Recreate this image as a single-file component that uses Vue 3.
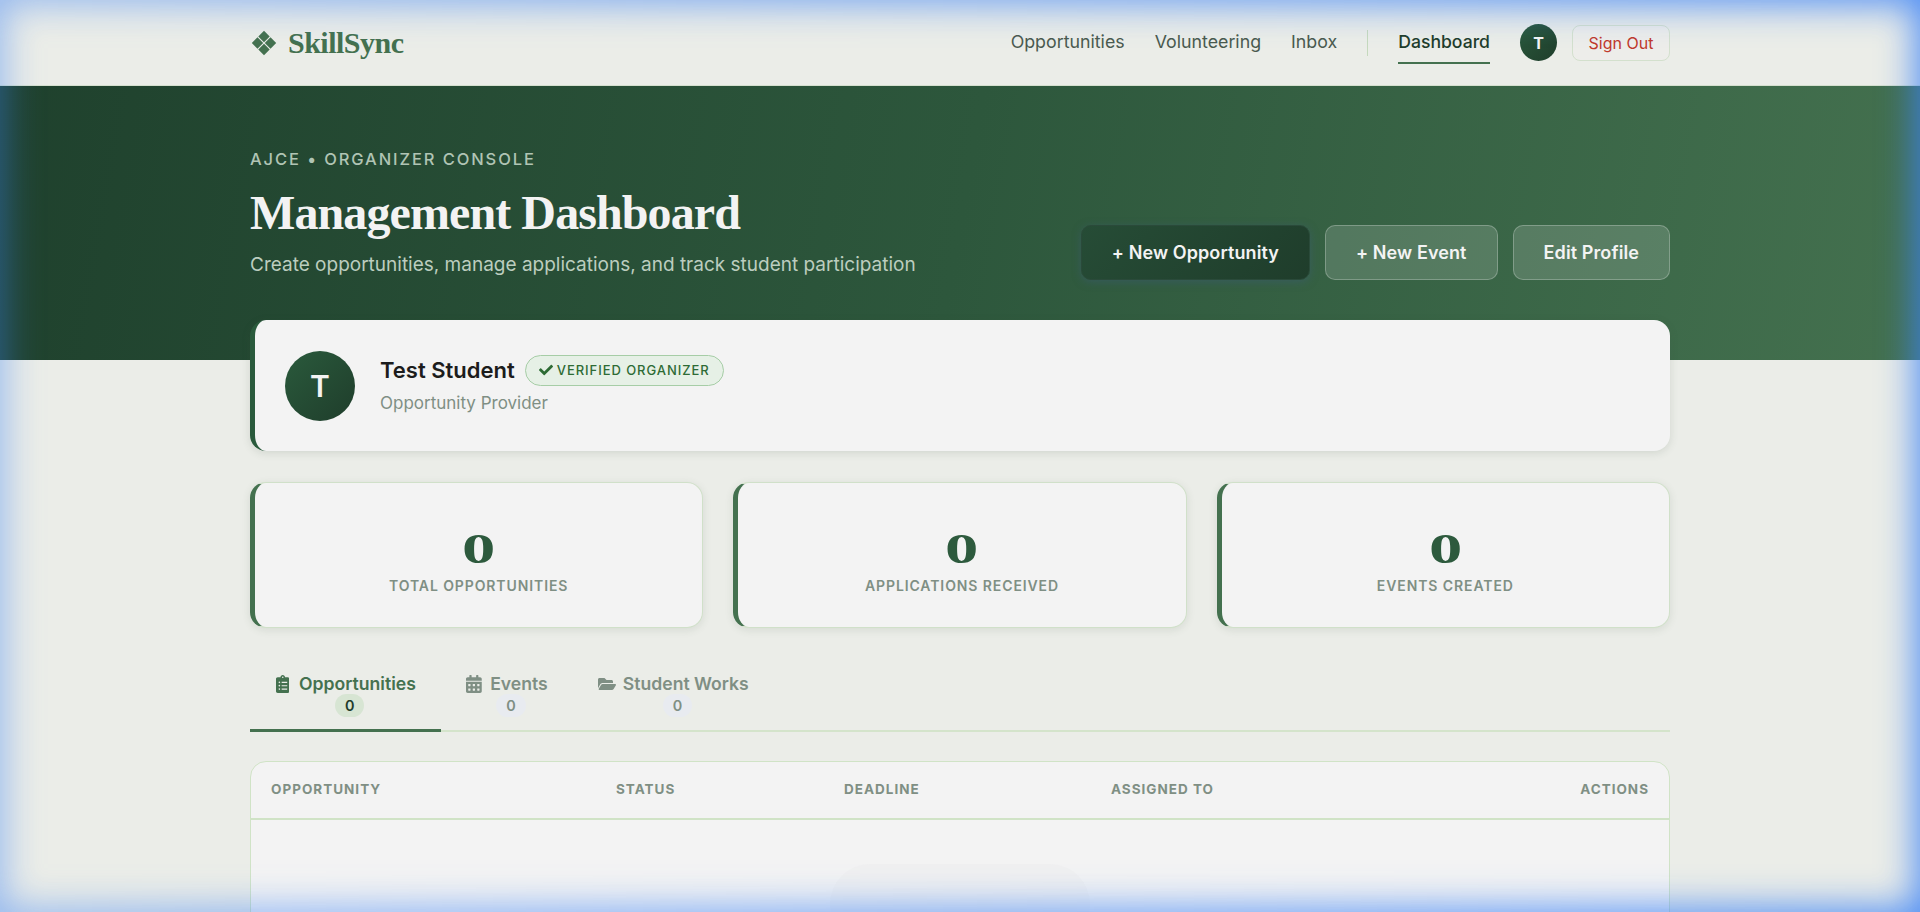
<template>
  <div class="page">
    <nav class="navbar">
      <div class="nav-inner">
        <a class="brand">
          <svg class="brand-icon" viewBox="0 0 26 26">
            <path d="M13 .8l5.700 5.700-5.700 5.700-5.700-5.700zM6.500 7.300l5.700 5.700-5.700 5.700L.8 13zM19.500 7.300l5.700 5.700-5.700 5.700L13.800 13zM13 13.800l5.700 5.700-5.700 5.700-5.700-5.700z" />
          </svg>
          <span>SkillSync</span>
        </a>
        <div class="nav-links">
          <a v-for="link in links" :key="link" class="nav-link">{{ link }}</a>
          <span class="nav-sep"></span>
          <a class="nav-link nav-link--active">Dashboard</a>
          <span class="nav-avatar">T</span>
          <button class="btn-signout">Sign Out</button>
        </div>
      </div>
    </nav>

    <header class="hero">
      <div class="hero-inner">
        <div>
          <p class="eyebrow">AJCE • ORGANIZER CONSOLE</p>
          <h1 class="hero-title">Management Dashboard</h1>
          <p class="hero-sub">Create opportunities, manage applications, and track student participation</p>
        </div>
        <div class="hero-actions">
          <button class="btn btn--dark">+ New Opportunity</button>
          <button class="btn btn--ghost">+ New Event</button>
          <button class="btn btn--ghost">Edit Profile</button>
        </div>
      </div>
    </header>

    <main class="content">
      <section class="profile-card">
        <div class="profile-avatar">T</div>
        <div class="profile-info">
          <div class="profile-name-row">
            <span class="profile-name">Test Student</span>
            <span class="verified">
              <svg class="verified-icon" viewBox="0 0 512 512">
                <path d="M173.900 439.400L7.500 273c-10-10-10-26.200 0-36.200l36.200-36.200c10-10 26.200-10 36.200 0L192 312.700 432.100 72.600c10-10 26.200-10 36.200 0l36.200 36.200c10 10 10 26.200 0 36.200L210.100 439.400c-10 10-26.200 10-36.200 0z" />
              </svg>
              VERIFIED ORGANIZER
            </span>
          </div>
          <p class="profile-role">Opportunity Provider</p>
        </div>
      </section>

      <section class="stats">
        <div v-for="stat in stats" :key="stat" class="stat-card">
          <div class="stat-value">0</div>
          <div class="stat-label">{{ stat }}</div>
        </div>
      </section>

      <div class="tabs">
        <button class="tab tab--active">
          <span class="tab-label">
            <svg class="tab-icon tab-icon--clip" viewBox="0 0 384 512">
              <path d="M336 64h-80c0-35.300-28.700-64-64-64s-64 28.700-64 64H48C21.500 64 0 85.500 0 112v352c0 26.500 21.500 48 48 48h288c26.500 0 48-21.500 48-48V112c0-26.500-21.500-48-48-48zM96 424c-13.300 0-24-10.700-24-24s10.700-24 24-24 24 10.700 24 24-10.700 24-24 24zm0-96c-13.300 0-24-10.700-24-24s10.700-24 24-24 24 10.700 24 24-10.700 24-24 24zm0-96c-13.300 0-24-10.700-24-24s10.700-24 24-24 24 10.700 24 24-10.700 24-24 24zm96-192c13.300 0 24 10.700 24 24s-10.700 24-24 24-24-10.700-24-24 10.700-24 24-24zm128 368c0 4.400-3.600 8-8 8H168c-4.400 0-8-3.600-8-8v-16c0-4.400 3.600-8 8-8h144c4.400 0 8 3.600 8 8v16zm0-96c0 4.400-3.600 8-8 8H168c-4.400 0-8-3.600-8-8v-16c0-4.400 3.600-8 8-8h144c4.400 0 8 3.600 8 8v16zm0-96c0 4.400-3.600 8-8 8H168c-4.400 0-8-3.600-8-8v-16c0-4.400 3.600-8 8-8h144c4.400 0 8 3.600 8 8v16z" />
            </svg>
            Opportunities
          </span>
          <span class="tab-count tab-count--active">0</span>
        </button>
        <button class="tab">
          <span class="tab-label">
            <svg class="tab-icon" viewBox="0 0 448 512">
              <path d="M0 464c0 26.500 21.500 48 48 48h352c26.500 0 48-21.500 48-48V192H0v272zm320-196c0-6.600 5.400-12 12-12h40c6.600 0 12 5.400 12 12v40c0 6.600-5.400 12-12 12h-40c-6.600 0-12-5.400-12-12v-40zm0 128c0-6.600 5.400-12 12-12h40c6.600 0 12 5.400 12 12v40c0 6.600-5.400 12-12 12h-40c-6.600 0-12-5.400-12-12v-40zM192 268c0-6.600 5.400-12 12-12h40c6.600 0 12 5.400 12 12v40c0 6.600-5.400 12-12 12h-40c-6.600 0-12-5.400-12-12v-40zm0 128c0-6.600 5.400-12 12-12h40c6.600 0 12 5.400 12 12v40c0 6.600-5.400 12-12 12h-40c-6.600 0-12-5.400-12-12v-40zM64 268c0-6.600 5.400-12 12-12h40c6.600 0 12 5.400 12 12v40c0 6.600-5.400 12-12 12H76c-6.600 0-12-5.400-12-12v-40zm0 128c0-6.600 5.400-12 12-12h40c6.600 0 12 5.400 12 12v40c0 6.600-5.400 12-12 12H76c-6.600 0-12-5.400-12-12v-40zM400 64h-48V16c0-8.800-7.200-16-16-16h-32c-8.800 0-16 7.200-16 16v48H160V16c0-8.800-7.200-16-16-16h-32c-8.800 0-16 7.200-16 16v48H48C21.500 64 0 85.500 0 112v48h448v-48c0-26.500-21.500-48-48-48z" />
            </svg>
            Events
          </span>
          <span class="tab-count">0</span>
        </button>
        <button class="tab">
          <span class="tab-label tab-label--tight">
            <svg class="tab-icon tab-icon--folder" viewBox="0 0 576 512">
              <path d="M572.694 292.093L500.270 416.248A63.997 63.997 0 0 1 444.989 448H45.025c-18.523 0-30.064-20.093-20.731-36.093l72.424-124.155A64 64 0 0 1 152 256h399.964c18.523 0 30.064 20.093 20.730 36.093zM152 224h328v-48c0-26.510-21.490-48-48-48H272l-64-64H48C21.490 64 0 85.490 0 112v278.046l69.077-118.418C86.214 242.250 117.989 224 152 224z" />
            </svg>
            Student Works
          </span>
          <span class="tab-count">0</span>
        </button>
      </div>

      <section class="table-card">
        <div class="table-head">
          <span class="col col--title">OPPORTUNITY</span>
          <span class="col col--status">STATUS</span>
          <span class="col col--deadline">DEADLINE</span>
          <span class="col col--assigned">ASSIGNED TO</span>
          <span class="col col--actions">ACTIONS</span>
        </div>
        <div class="table-body">
          <div class="placeholder"></div>
        </div>
      </section>
    </main>

    <div class="edge-glow"></div>
  </div>
</template>

<script setup>
const links = ['Opportunities', 'Volunteering', 'Inbox']
const stats = ['TOTAL OPPORTUNITIES', 'APPLICATIONS RECEIVED', 'EVENTS CREATED']
</script>

<style>
html,
body {
  margin: 0;
  height: 100%;
  overflow: hidden;
  background: #ebede8;
}
</style>

<style scoped>
.page {
  height: 912px;
  overflow: hidden;
  background: #ebede8;
  font-family: Inter, 'Liberation Sans', sans-serif;
  color: #1c1c1c;
}

.navbar {
  height: 85px;
  border-bottom: 1px solid #d5e0cf;
  background: #ebede8;
}

.nav-inner,
.hero-inner,
.content {
  width: 1420px;
  margin: 0 auto;
}

.nav-inner {
  height: 100%;
  display: flex;
  align-items: center;
  justify-content: space-between;
}

.brand {
  display: flex;
  align-items: center;
  gap: 11px;
  margin-left: 1px;
  font-family: 'Liberation Serif', serif;
  font-size: 30px;
  font-weight: 700;
  letter-spacing: -0.5px;
  color: #44714f;
}

.brand-icon {
  width: 26px;
  height: 26px;
  fill: #44714f;
}

.nav-links {
  display: flex;
  align-items: center;
}

.nav-link {
  margin-right: 30px;
  padding: 10px 0;
  border-bottom: 2px solid transparent;
  font-size: 17.8px;
  line-height: 21px;
  color: #4a5a4e;
}

.nav-sep {
  width: 1px;
  height: 26px;
  margin-right: 30px;
  background: #c5d9bd;
}

.nav-link--active {
  font-size: 17.6px;
  font-weight: 500;
  color: #1f3d2b;
  border-bottom-color: #44714f;
}

.nav-avatar {
  width: 37px;
  height: 37px;
  margin-right: 15px;
  border-radius: 50%;
  display: flex;
  align-items: center;
  justify-content: center;
  background: linear-gradient(135deg, #2a5a3c, #1f3d2b);
  color: #f3f3f3;
  font-size: 16px;
  font-weight: 700;
}

.btn-signout {
  width: 98px;
  height: 36px;
  border: 1px solid #d3e0cd;
  border-radius: 8px;
  background: #ededea;
  color: #c0392b;
  font-family: inherit;
  font-size: 16px;
}

.hero {
  height: 274px;
  background: linear-gradient(100deg, #1f412d 0%, #2d573c 50%, #44714f 100%);
}

.hero-inner {
  height: 100%;
  box-sizing: border-box;
  padding-top: 63px;
  display: flex;
  justify-content: space-between;
  align-items: flex-start;
}

.eyebrow {
  margin: 0;
  font-size: 16.5px;
  font-weight: 500;
  letter-spacing: 1.9px;
  color: #b0c4b4;
}

.hero-title {
  margin: 13px 0 9px;
  font-family: 'Liberation Serif', serif;
  font-size: 48px;
  font-weight: 700;
  letter-spacing: -0.9px;
  line-height: 62px;
  color: #f3f3f3;
}

.hero-sub {
  margin: 0;
  font-size: 19px;
  color: #bccdbf;
}

.hero-actions {
  display: flex;
  gap: 15px;
  margin-top: 76px;
}

.btn {
  height: 55px;
  padding: 0 30px;
  border-radius: 10px;
  font-family: inherit;
  font-size: 18px;
  font-weight: 600;
  letter-spacing: 0.1px;
  color: #f3f3f3;
}

.btn--dark {
  border: 1px solid #2a4a3a;
  background: linear-gradient(135deg, #264c36, #1f3d2b);
  box-shadow: 0 2px 8px rgba(59, 90, 120, 0.5);
}

.btn--ghost {
  border: 1px solid rgba(255, 255, 255, 0.25);
  background: rgba(255, 255, 255, 0.15);
}

.content {
  margin-top: -40px;
  position: relative;
}

.profile-card {
  height: 131px;
  box-sizing: border-box;
  display: flex;
  align-items: center;
  gap: 25px;
  padding-left: 30px;
  border-left: 5px solid #2a5a3c;
  border-radius: 16px;
  background: #f3f3f3;
  box-shadow: 0 2px 8px rgba(60, 80, 60, 0.15);
}

.profile-avatar {
  width: 70px;
  height: 70px;
  border-radius: 50%;
  display: flex;
  align-items: center;
  justify-content: center;
  background: linear-gradient(135deg, #2a5a3c, #1f3d2b);
  color: #f3f3f3;
  font-size: 30px;
  font-weight: 600;
}

.profile-info {
  padding-bottom: 4px;
}

.profile-name-row {
  display: flex;
  align-items: center;
  gap: 10px;
}

.profile-name {
  font-size: 22px;
  font-weight: 600;
}

.verified {
  display: flex;
  align-items: center;
  gap: 4px;
  height: 31px;
  box-sizing: border-box;
  padding: 0 13px;
  border: 1px solid #a6cda6;
  border-radius: 16px;
  background: #e6f0e6;
  color: #2e6b35;
  font-size: 13px;
  font-weight: 500;
  letter-spacing: 0.95px;
}

.verified-icon {
  width: 14px;
  height: 14px;
  fill: #2e6b35;
}

.profile-role {
  margin: 7px 0 0;
  font-size: 17px;
  color: #7f8f84;
}

.stats {
  display: grid;
  grid-template-columns: repeat(3, 1fr);
  gap: 30px;
  margin-top: 31px;
}

.stat-card {
  height: 146px;
  box-sizing: border-box;
  display: flex;
  flex-direction: column;
  align-items: center;
  justify-content: center;
  padding-top: 6px;
  border: 1px solid #d0e0c9;
  border-left: 5px solid #44714f;
  border-radius: 16px;
  background: #f3f3f3;
  box-shadow: 0 2px 8px rgba(60, 80, 60, 0.12);
}

.stat-value {
  font-family: 'Liberation Serif', serif;
  font-size: 43px;
  font-weight: 700;
  line-height: 52px;
  color: #2d5a3d;
  transform: scaleX(1.55);
}

.stat-label {
  margin-top: 2px;
  font-size: 14px;
  font-weight: 600;
  letter-spacing: 0.9px;
  color: #7f8f84;
}

.tabs {
  display: flex;
  margin-top: 30px;
  border-bottom: 2px solid #d4e4cb;
}

.tab {
  display: flex;
  flex-direction: column;
  align-items: center;
  padding: 15px 25px 12px 25.6px;
  margin-bottom: -2px;
  border: none;
  border-bottom: 3px solid transparent;
  background: none;
  color: #7f8f84;
  font-family: inherit;
  font-size: 17.6px;
  font-weight: 600;
  line-height: 21px;
}

.tab--active {
  color: #44714f;
  border-bottom-color: #44714f;
}

.tab-label {
  display: flex;
  align-items: center;
  gap: 8px;
}

.tab-label--tight {
  gap: 6.5px;
}

.tab-icon {
  height: 18px;
  fill: currentColor;
}

.tab-icon--clip {
  margin-right: 2px;
}

.tab-icon--folder {
  height: 16px;
}

.tab-count {
  margin-left: 8px;
  padding: 0 10px;
  border-radius: 12px;
  background: #e8ebf0;
  color: #7f8f84;
  font-size: 14.4px;
  font-weight: 600;
  line-height: 23px;
}

.tab-count--active {
  background: #d7e5d3;
  color: #1f3d2b;
}

.table-card {
  margin-top: 29px;
  height: 300px;
  border: 1px solid #d0e3c6;
  border-radius: 16px;
  background: #f3f3f3;
  overflow: hidden;
}

.table-head {
  height: 53px;
  display: flex;
  align-items: center;
  padding: 0 20px 3px;
  border-bottom: 2px solid #d0e3c6;
  font-size: 13.5px;
  font-weight: 700;
  letter-spacing: 1px;
  color: #7f8f84;
}

.col--title {
  width: 345px;
}

.col--status {
  width: 228px;
}

.col--deadline {
  width: 267px;
}

.col--actions {
  margin-left: auto;
}

.table-body {
  display: flex;
  justify-content: center;
  padding-top: 44px;
}

.placeholder {
  width: 260px;
  height: 80px;
  border-radius: 40px;
  background: #f0f0f0;
}

.edge-glow {
  position: fixed;
  inset: 0;
  pointer-events: none;
  box-shadow: inset 0 0 36px 4px rgba(59, 130, 246, 0.9);
  -webkit-mask-image: linear-gradient(to right, rgba(0, 0, 0, 0.55), #000);
  mask-image: linear-gradient(to right, rgba(0, 0, 0, 0.55), #000);
}
</style>
